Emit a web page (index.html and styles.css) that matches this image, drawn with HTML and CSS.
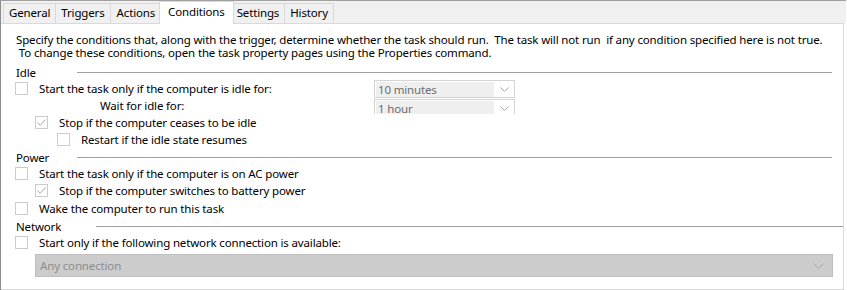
FILE: index.html
```html
<!DOCTYPE html>
<html>
<head>
<meta charset="utf-8">
<link rel="stylesheet" href="styles.css">
</head>
<body>
<div class="window">
  <div class="tabs">
    <div class="tab">General</div>
    <div class="tab">Triggers</div>
    <div class="tab wide-tab">Actions</div>
    <div class="tab active">Conditions</div>
    <div class="tab">Settings</div>
    <div class="tab">History</div>
  </div>
  <div class="panel">
    <p class="desc">Specify the conditions that, along with the trigger, determine whether the task should run.&nbsp; The task will not run &nbsp;if any condition specified here is not true.<br>&nbsp;To change these conditions, open the task property pages using the Properties command.</p>

    <div class="section s-idle"><span class="sec-label">Idle</span><span class="rule"></span></div>
    <div class="row combo-row">
      <label class="check lvl0"><span class="box"></span>Start the task only if the computer is idle for:</label>
      <div class="combo"><span class="combo-text">10 minutes</span><span class="combo-arrow"><svg width="9" height="5" viewBox="0 0 9 5"><path d="M0.5 0.5 L4.5 4.5 L8.5 0.5" fill="none" stroke="#a6a6a6" stroke-width="1"/></svg></span></div>
    </div>
    <div class="row combo-row">
      <span class="plain wait">Wait for idle for:</span>
      <div class="combo clipped"><span class="combo-text">1 hour</span><span class="combo-arrow"><svg width="9" height="5" viewBox="0 0 9 5"><path d="M0.5 0.5 L4.5 4.5 L8.5 0.5" fill="none" stroke="#a6a6a6" stroke-width="1"/></svg></span></div>
    </div>
    <div class="row"><label class="check lvl1"><span class="box checked"><svg width="11" height="11" viewBox="0 0 11 11"><path d="M1.5 5.5 L4.3 8.3 L9.5 2.5" fill="none" stroke="#a9a9a9" stroke-width="1"/></svg></span>Stop if the computer ceases to be idle</label></div>
    <div class="row"><label class="check lvl2"><span class="box"></span>Restart if the idle state resumes</label></div>

    <div class="section s-power"><span class="sec-label">Power</span><span class="rule"></span></div>
    <div class="row"><label class="check lvl0"><span class="box"></span>Start the task only if the computer is on AC power</label></div>
    <div class="row"><label class="check lvl1"><span class="box checked"><svg width="11" height="11" viewBox="0 0 11 11"><path d="M1.5 5.5 L4.3 8.3 L9.5 2.5" fill="none" stroke="#a9a9a9" stroke-width="1"/></svg></span>Stop if the computer switches to battery power</label></div>
    <div class="row tall"><label class="check lvl0"><span class="box"></span>Wake the computer to run this task</label></div>

    <div class="section s-net"><span class="sec-label wide">Network</span><span class="rule"></span></div>
    <div class="row"><label class="check lvl0"><span class="box"></span>Start only if the following network connection is available:</label></div>
    <div class="net-combo"><span>Any connection</span><svg width="11" height="6" viewBox="0 0 11 6"><path d="M0.5 0.5 L5.5 5.5 L10.5 0.5" fill="none" stroke="#a8a8a8" stroke-width="1"/></svg></div>
  </div>
</div>
</body>
</html>
```
FILE: styles.css
```css
* { box-sizing: border-box; }
html, body { margin: 0; padding: 0; background: #ffffff; }
body {
  width: 847px;
  height: 290px;
  overflow: hidden;
  font-family: "Noto Sans", "Open Sans", sans-serif;
  font-size: 11.5px;
  letter-spacing: -0.15px;
  color: #000;
}
.window {
  width: 846px;
  height: 290px;
  border-left: 1px solid #8c8c8c;
  border-top: 1px solid #a0a0a0;
  display: flex;
  flex-direction: column;
}
.tabs {
  display: flex;
  height: 22px;
  padding-left: 2px;
  align-items: flex-end;
  background: #f0f0f0;
}
.tab {
  height: 20px;
  padding: 0 5px;
  line-height: 18px;
  border: 1px solid #d9d9d9;
  border-bottom: none;
  margin-right: -1px;
  background: #f0f0f0;
  white-space: nowrap;
}
.tab.wide-tab { padding: 0 6px; }
.tab.active {
  height: 23px;
  margin-bottom: -1px;
  background: #fff;
  position: relative;
  z-index: 2;
  line-height: 19px;
  padding: 0 8px;
  margin-left: -2px;
  margin-right: -3px;
}
.panel {
  flex: 1;
  background: #fff;
  border: 1px solid #d9d9d9;
  border-left: none;
  margin-right: 2px;
  padding: 9px 0 0 0;
}
.desc {
  margin: 0 0 0 15px;
  line-height: 13px;
  white-space: nowrap;
}
.section {
  display: flex;
  align-items: center;
  height: 16px;
  padding-left: 15px;
}
.s-idle { margin-top: 5px; }
.s-power { margin-top: 1px; }
.s-net { margin-top: 1px; }
.sec-label { width: 61px; }
.sec-label.wide { width: 81px; }
.rule {
  width: 755px;
  border-top: 1px solid #a0a0a0;
}
.row {
  display: flex;
  align-items: center;
  height: 17px;
}
.row.tall { height: 18px; }
.check {
  display: flex;
  align-items: center;
  white-space: nowrap;
}
.lvl0 { padding-left: 14px; }
.lvl1 { padding-left: 34px; }
.lvl2 { padding-left: 56px; }
.box {
  width: 13px;
  height: 13px;
  border: 1px solid #cccccc;
  background: #fff;
  margin-right: 11px;
  display: flex;
  align-items: center;
  justify-content: center;
  flex: none;
}
.combo-row .check, .combo-row .wait { width: 373px; }
.wait { padding-left: 99px; white-space: nowrap; }
.combo {
  width: 141px;
  height: 18px;
  border: 1px solid #d4d4d4;
  display: flex;
  background: #fff;
  color: #6d6d6d;
  padding: 1px 0 0 1px;
}
.combo.clipped { height: 15px; align-self: flex-end; border-bottom: none; overflow: hidden; }
.combo-text {
  flex: 1;
  background: #efefef;
  padding-left: 2px;
  line-height: 15px;
  height: 15px;
}
.combo-arrow {
  width: 20px;
  display: flex;
  align-items: center;
  justify-content: center;
  padding-top: 1px;
}
.net-combo {
  margin: 3px 0 0 34px;
  width: 798px;
  height: 23px;
  background: #cccccc;
  border: 1px solid #bfbfbf;
  color: #8c8c8c;
  display: flex;
  align-items: center;
  justify-content: space-between;
  padding: 0 8px 0 4px;
}
```
